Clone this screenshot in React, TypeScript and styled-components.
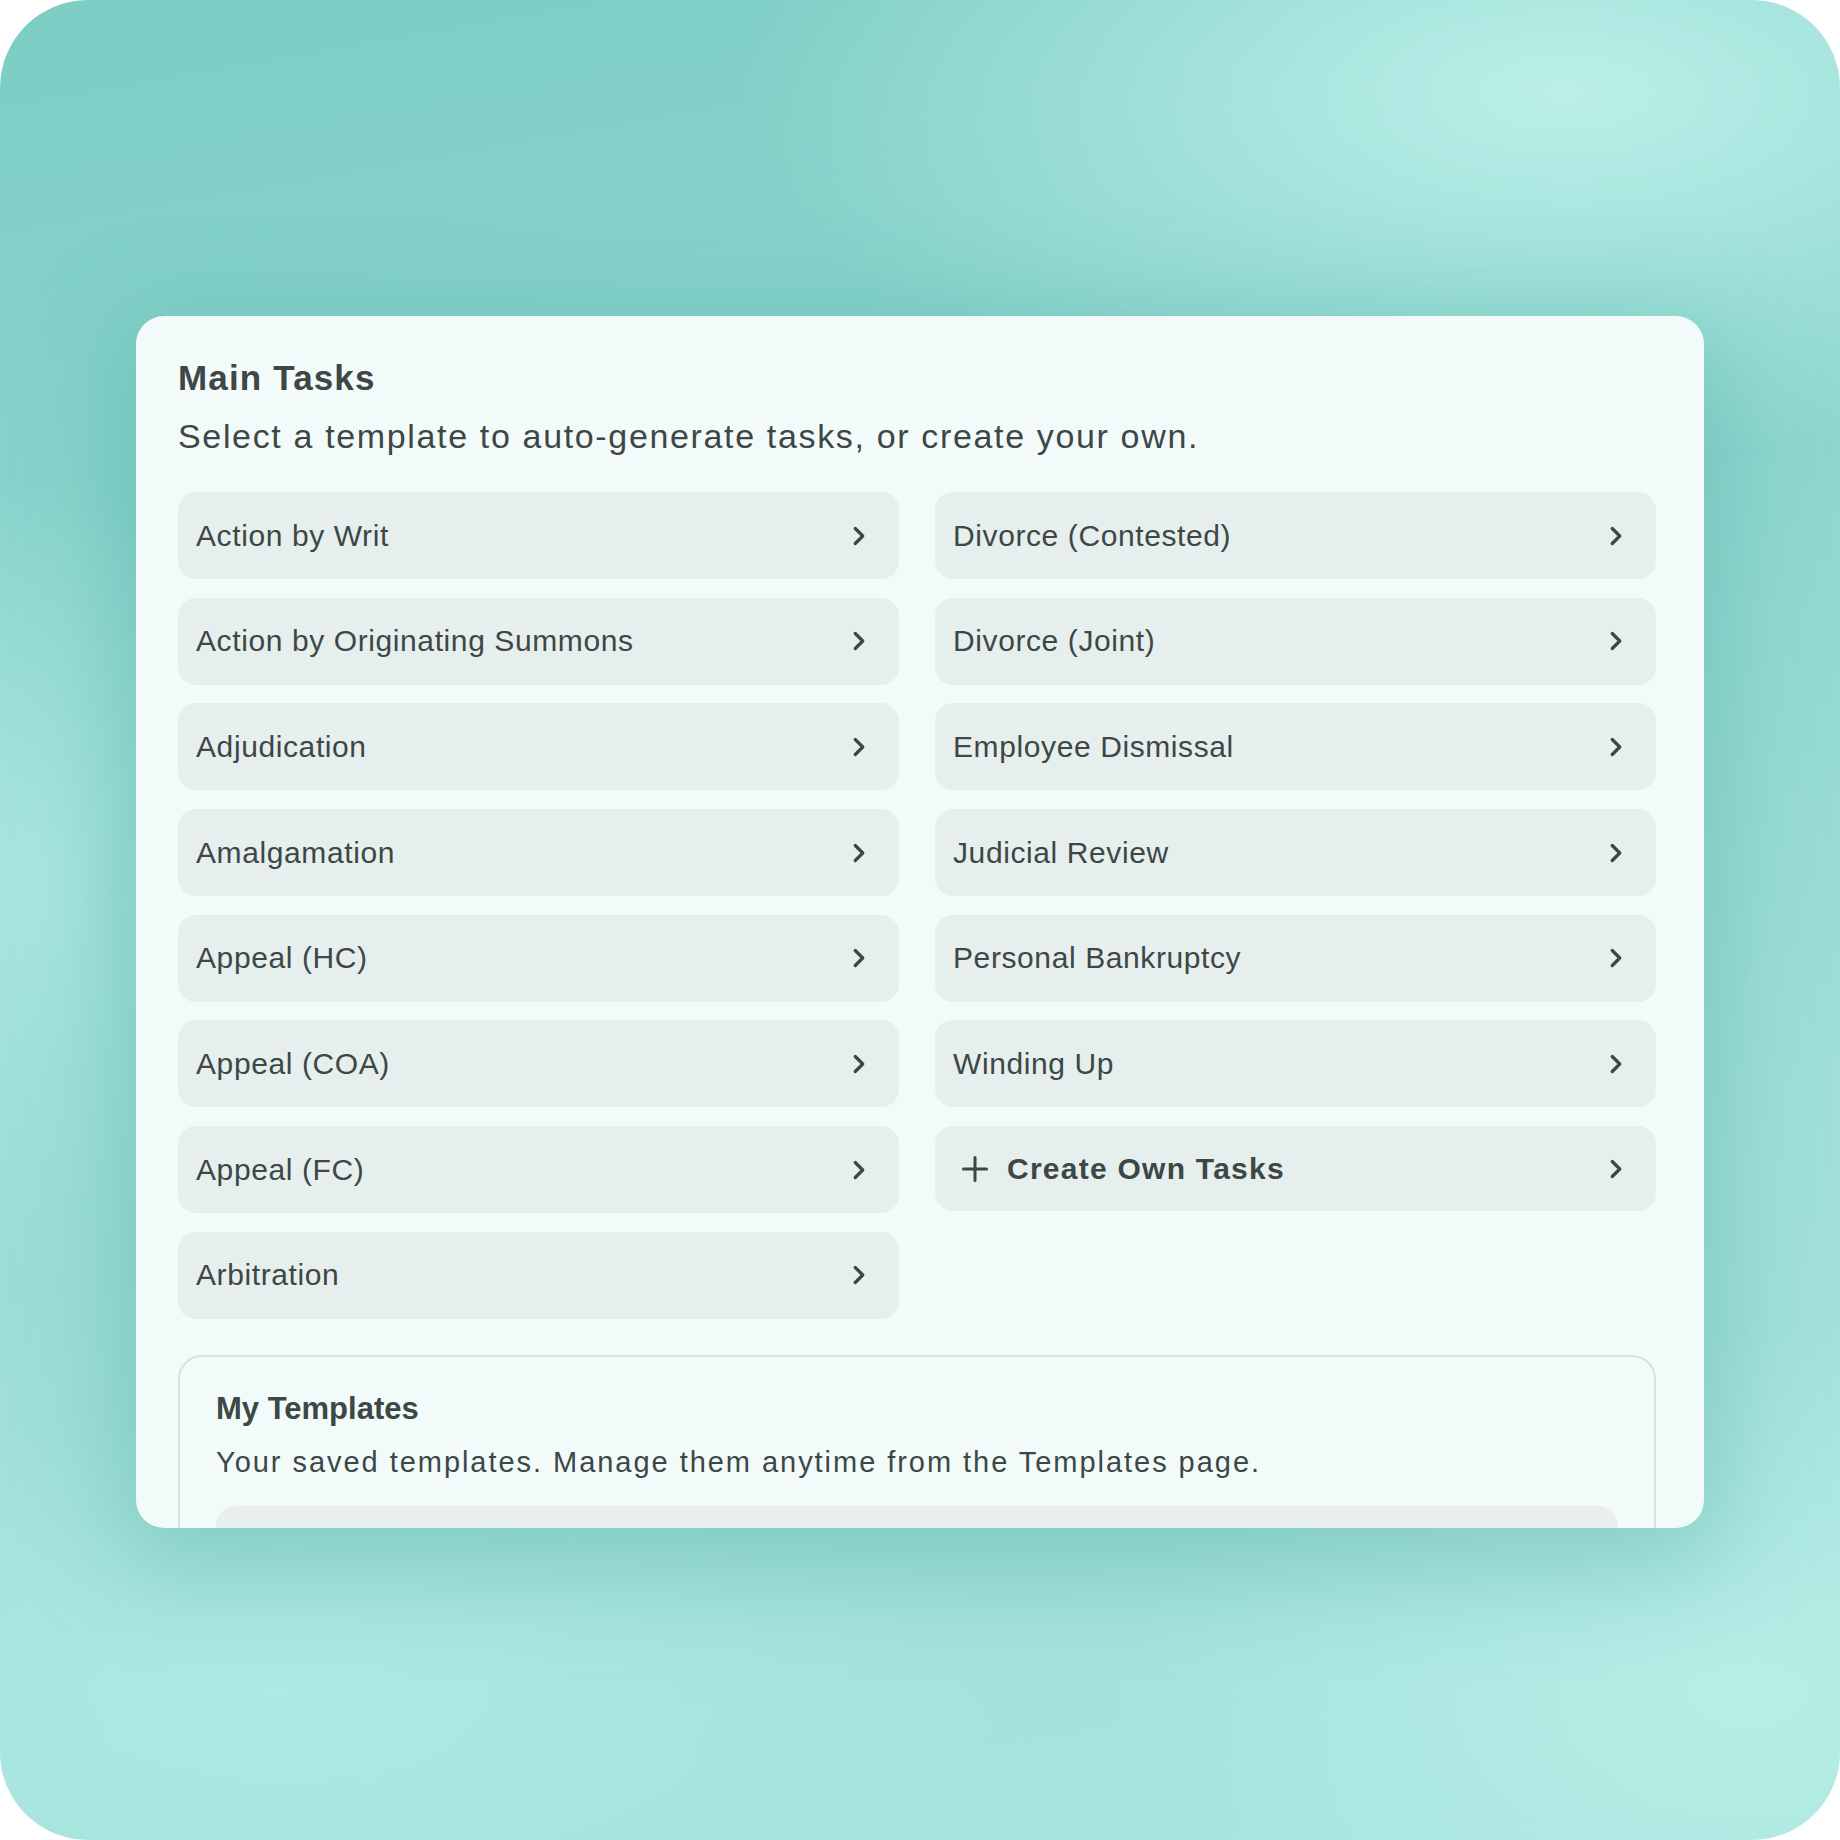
import styled, { createGlobalStyle } from 'styled-components';
import { ChevronRight } from 'lucide-react';

const GlobalStyle = createGlobalStyle`
  body {
    margin: 0;
    background: #ffffff;
    font-family: 'Liberation Sans', Arial, sans-serif;
  }
`;

const leftTasks = [
  'Action by Writ',
  'Action by Originating Summons',
  'Adjudication',
  'Amalgamation',
  'Appeal (HC)',
  'Appeal (COA)',
  'Appeal (FC)',
  'Arbitration',
];

const rightTasks = [
  'Divorce (Contested)',
  'Divorce (Joint)',
  'Employee Dismissal',
  'Judicial Review',
  'Personal Bankruptcy',
  'Winding Up',
];

function PlusIcon() {
  return (
    <svg width='26' height='26' viewBox='0 0 26 26' fill='none'>
      <path d='M13 1.5V24.5M1.5 13H24.5' stroke='#3c4746' strokeWidth='3' strokeLinecap='round' />
    </svg>
  );
}

function TaskButton({ label }: { label: string }) {
  return (
    <TaskRow>
      <TaskLabel>{label}</TaskLabel>
      <ChevronRight size={30} strokeWidth={2.6} color='#3c4746' />
    </TaskRow>
  );
}

export default function App() {
  return (
    <>
      <GlobalStyle />
      <Backdrop>
        <Card>
          <Title>Main Tasks</Title>
          <Subtitle>Select a template to auto-generate tasks, or create your own.</Subtitle>

          <TaskGrid>
            <TaskColumn>
              {leftTasks.map((t) => (
                <TaskButton key={t} label={t} />
              ))}
            </TaskColumn>
            <TaskColumn>
              {rightTasks.map((t) => (
                <TaskButton key={t} label={t} />
              ))}
              <TaskRow $create>
                <CreateLabel>
                  <PlusIcon />
                  Create Own Tasks
                </CreateLabel>
                <ChevronRight size={30} strokeWidth={2.6} color='#3c4746' />
              </TaskRow>
            </TaskColumn>
          </TaskGrid>

          <TemplatesBox>
            <TemplatesTitle>My Templates</TemplatesTitle>
            <TemplatesText>Your saved templates. Manage them anytime from the Templates page.</TemplatesText>
            <TemplatePlaceholder />
          </TemplatesBox>
        </Card>
      </Backdrop>
    </>
  );
}

const Backdrop = styled.div`
  width: 1840px;
  height: 1840px;
  box-sizing: border-box;
  border-radius: 88px;
  overflow: hidden;
  display: flex;
  justify-content: center;
  align-items: flex-start;
  padding-top: 316px;
  background:
    radial-gradient(ellipse 45% 20% at 85% 5%, rgba(190, 241, 235, 0.95), rgba(190, 241, 235, 0)),
    radial-gradient(ellipse 14% 22% at 2% 48%, rgba(172, 232, 225, 0.9), rgba(172, 232, 225, 0)),
    radial-gradient(ellipse 40% 16% at 15% 92%, rgba(176, 234, 228, 0.85), rgba(176, 234, 228, 0)),
    radial-gradient(ellipse 35% 20% at 95% 92%, rgba(186, 239, 233, 0.85), rgba(186, 239, 233, 0)),
    linear-gradient(170deg, #7dcdc4 0%, #8ad5cd 30%, #9fdfd8 65%, #a8e4de 100%);
`;

const Card = styled.div`
  width: 1568px;
  height: 1212px;
  box-sizing: border-box;
  padding: 41px 48px 0 42px;
  border-radius: 28px;
  overflow: hidden;
  background: #f3fbfa;
  box-shadow: 0 24px 100px 16px rgba(70, 166, 156, 0.38);
  color: #3c4746;
`;

const Title = styled.h1`
  margin: 0;
  font-size: 35px;
  line-height: 42px;
  font-weight: 700;
  letter-spacing: 1.15px;
`;

const Subtitle = styled.p`
  margin: 15px 0 0;
  font-size: 34px;
  line-height: 44px;
  letter-spacing: 1.65px;
`;

const TaskGrid = styled.div`
  margin-top: 34px;
  display: grid;
  grid-template-columns: 1fr 1fr;
  column-gap: 36px;
  align-items: start;
`;

const TaskColumn = styled.div`
  display: flex;
  flex-direction: column;
  row-gap: 18.7px;
`;

const TaskRow = styled.div<{ $create?: boolean }>`
  display: flex;
  align-items: center;
  justify-content: space-between;
  height: ${({ $create }) => ($create ? '85px' : '87px')};
  box-sizing: border-box;
  padding: 0 25px 0 ${({ $create }) => ($create ? '27px' : '18px')};
  border-radius: 18px;
  background: #e7efee;
`;

const TaskLabel = styled.span`
  font-size: 30px;
  letter-spacing: 0.6px;
`;

const CreateLabel = styled.span`
  display: flex;
  align-items: center;
  column-gap: 19px;
  font-size: 30px;
  font-weight: 700;
  letter-spacing: 1.25px;
`;

const TemplatesBox = styled.div`
  margin-top: 36px;
  border: 2px solid #d9e0df;
  border-radius: 24px;
  padding: 34px 36px 40px;
`;

const TemplatesTitle = styled.h2`
  margin: 0;
  font-size: 31px;
  line-height: 36px;
  font-weight: 700;
`;

const TemplatesText = styled.p`
  margin: 17px 0 0;
  font-size: 29px;
  line-height: 36px;
  letter-spacing: 1.96px;
`;

const TemplatePlaceholder = styled.div`
  margin-top: 26px;
  height: 90px;
  border-radius: 20px;
  background: #e8efee;
`;
